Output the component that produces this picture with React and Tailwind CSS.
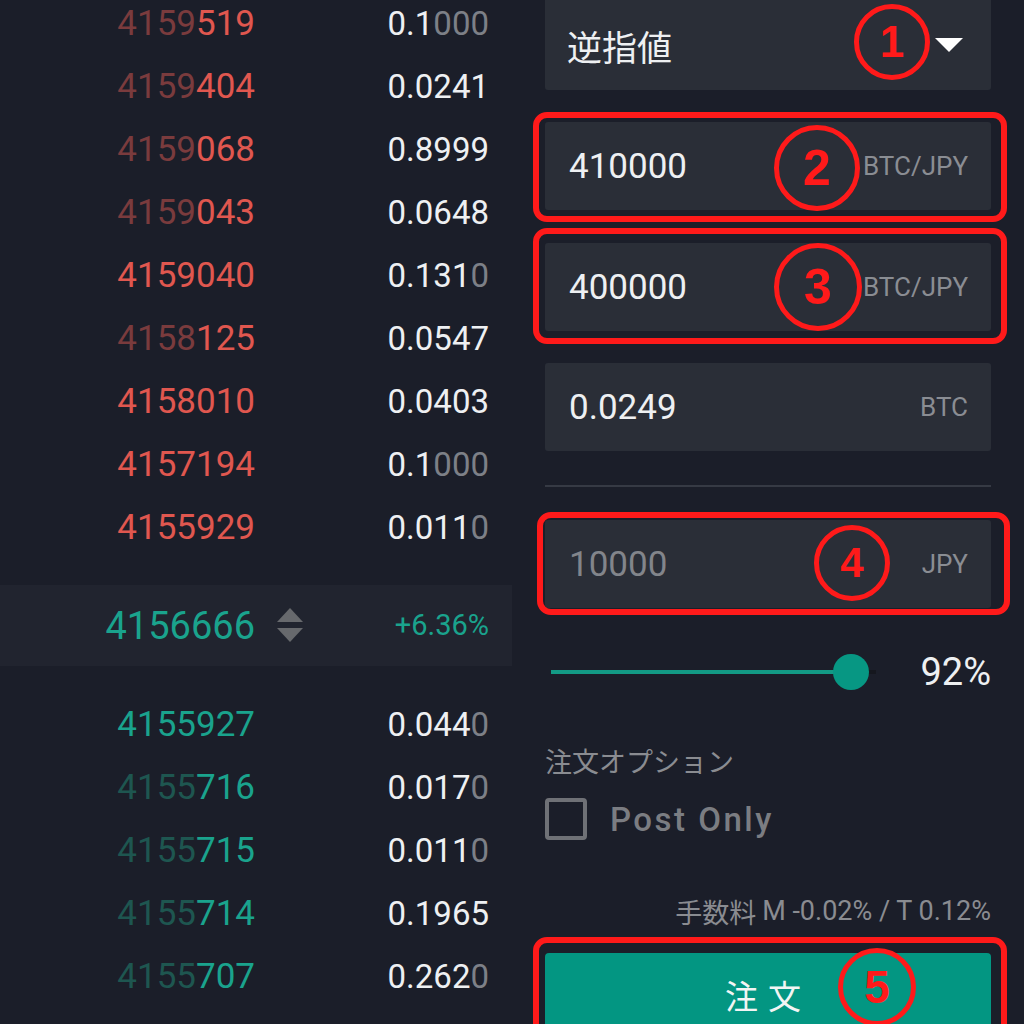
import React from "react";

const asks = [
  [["4159", "519"], ["0.1", "000"]],
  [["4159", "404"], ["0.0241", ""]],
  [["4159", "068"], ["0.8999", ""]],
  [["4159", "043"], ["0.0648", ""]],
  [["", "4159040"], ["0.131", "0"]],
  [["4158", "125"], ["0.0547", ""]],
  [["", "4158010"], ["0.0403", ""]],
  [["", "4157194"], ["0.1", "000"]],
  [["", "4155929"], ["0.011", "0"]],
];

const bids = [
  [["", "4155927"], ["0.044", "0"]],
  [["4155", "716"], ["0.017", "0"]],
  [["4155", "715"], ["0.011", "0"]],
  [["4155", "714"], ["0.1965", ""]],
  [["4155", "707"], ["0.262", "0"]],
];

function Row({ price, size, side }) {
  const dim = side === "ask" ? "text-[#7a3b3d]" : "text-[#1e5650]";
  const bright = side === "ask" ? "text-[#e0574f]" : "text-[#1aa38d]";
  return (
    <div className="h-[63px] shrink-0 flex items-center text-[35px] leading-none">
      <div className="w-[255px] text-right">
        <span className={dim}>{price[0]}</span>
        <span className={bright}>{price[1]}</span>
      </div>
      <div className="flex-1 text-right pr-[23px] text-[33px]">
        <span className="text-[#eef0f2]">{size[0]}</span>
        <span className="text-[#7d8087]">{size[1]}</span>
      </div>
    </div>
  );
}

function Circle({ n, className }) {
  return (
    <div
      className={
        "absolute rounded-full border-[5px] border-[#ff1a1a] flex items-center justify-center text-[#ff1a1a] font-bold leading-none " +
        className
      }
      style={{ fontFamily: '"Liberation Sans", Arial, sans-serif' }}
    >
      {n}
    </div>
  );
}

function Input({ value, unit, placeholder }) {
  return (
    <div className="relative h-[88px] bg-[#2a2e37] rounded-[3px] flex items-center pl-[24px] pr-[23px]">
      <span className={"text-[35px] leading-none " + (placeholder ? "text-[#82858b]" : "text-[#eef0f2]")}>
        {value}
      </span>
      <span className="ml-auto text-[26px] text-[#8a8d93] leading-none">{unit}</span>
    </div>
  );
}

export default function App() {
  return (
    <div
      className="w-[1024px] h-[1024px] overflow-hidden bg-[#1b1e29] flex items-start"
      style={{ fontFamily: 'Roboto, "Noto Sans CJK JP", sans-serif' }}
    >
      {/* Order book */}
      <div className="w-[512px] shrink-0 flex flex-col">
        <div className="-mt-[8px] shrink-0">
          {asks.map((r, i) => (
            <Row key={i} price={r[0]} size={r[1]} side="ask" />
          ))}
        </div>
        <div className="mt-[26px] h-[81px] shrink-0 bg-[#21242f] flex items-center">
          <div className="w-[255px] text-right text-[38px] leading-none text-[#1aa38d]">4156666</div>
          <svg className="ml-[22px]" width="26" height="35" viewBox="0 0 26 35">
            <polygon points="13,0 26,14 0,14" fill="#67696d" />
            <polygon points="0,20 26,20 13,34" fill="#67696d" />
          </svg>
          <div className="flex-1 text-right pr-[23px] text-[29px] leading-none text-[#1aa38d]">+6.36%</div>
        </div>
        <div className="mt-[27px] shrink-0">
          {bids.map((r, i) => (
            <Row key={i} price={r[0]} size={r[1]} side="bid" />
          ))}
        </div>
      </div>

      {/* Order form */}
      <div className="w-[446px] shrink-0 ml-[33px] flex flex-col [&>*]:shrink-0">
        <div className="relative h-[90px] bg-[#2a2e37] rounded-b-[3px] flex items-center pl-[22px] pr-[28px]">
          <span
            className="text-[35px] text-[#eef0f2] leading-none"
            style={{ fontFamily: '"Noto Sans CJK JP", sans-serif' }}
          >
            逆指値
          </span>
          <svg className="ml-auto" width="28" height="14" viewBox="0 0 28 14">
            <polygon points="0,0 28,0 14,14" fill="#ffffff" />
          </svg>
          <Circle n="1" className="w-[76px] h-[76px] left-[309px] top-[4px] text-[44px]" />
        </div>

        <div className="relative mt-[32px]">
          <Input value="410000" unit="BTC/JPY" />
          <div className="absolute -left-[12px] -right-[16px] -top-[10px] -bottom-[12px] border-[6px] border-[#ff1a1a] rounded-[14px]" />
          <Circle n="2" className="w-[86px] h-[86px] left-[229px] top-[3px] text-[50px]" />
        </div>

        <div className="relative mt-[33px]">
          <Input value="400000" unit="BTC/JPY" />
          <div className="absolute -left-[12px] -right-[16px] -top-[15px] -bottom-[13px] border-[6px] border-[#ff1a1a] rounded-[14px]" />
          <Circle n="3" className="w-[88px] h-[88px] left-[229px] top-[0px] text-[50px]" />
        </div>

        <div className="mt-[32px]">
          <Input value="0.0249" unit="BTC" />
        </div>

        <div className="mt-[34px] h-[2px] bg-[#363a44]" />

        <div className="relative mt-[33px]">
          <Input value="10000" unit="JPY" placeholder />
          <div className="absolute -left-[8px] -right-[19px] -top-[8px] -bottom-[7px] border-[6px] border-[#ff1a1a] rounded-[14px]" />
          <Circle n="4" className="w-[76px] h-[76px] left-[269px] top-[5px] text-[42px]" />
        </div>

        <div className="mt-[44px] h-[40px] flex items-center">
          <div className="relative ml-[6px] w-[325px] h-[4px] bg-[#15171e]">
            <div className="h-[4px] w-[300px] bg-[#139a85]" />
            <div className="absolute left-[282px] -top-[16px] w-[36px] h-[36px] rounded-full bg-[#079783]" />
          </div>
          <span className="ml-auto text-[38px] leading-none text-[#eef0f2]">92%</span>
        </div>

        <div
          className="mt-[50px] h-[36px] flex items-center text-[27px] text-[#8a8c91] leading-none"
          style={{ fontFamily: '"Noto Sans CJK JP", sans-serif' }}
        >
          注文オプション
        </div>

        <div className="mt-[20px] h-[42px] flex items-center">
          <div className="w-[42px] h-[42px] border-[4px] border-[#6f7176] rounded-[4px]" />
          <span className="ml-[23px] text-[33px] font-medium tracking-[2.5px] text-[#7b7d82] leading-none">
            Post Only
          </span>
        </div>

        <div className="mt-[56px] h-[30px] flex items-center justify-end text-[27px] text-[#8a8c91] leading-none">
          <span style={{ fontFamily: '"Noto Sans CJK JP", sans-serif' }}>手数料</span>
          <span className="ml-[6px]">M -0.02% / T 0.12%</span>
        </div>

        <div className="relative mt-[27px]">
          <div className="h-[80px] bg-[#039682] rounded-[4px] flex items-center justify-center">
            <span
              className="text-[33px] text-[#f2f5f4] tracking-[10px] leading-none pt-[4px]"
              style={{ fontFamily: '"Noto Sans CJK JP", sans-serif' }}
            >
              注文
            </span>
          </div>
          <div className="absolute -left-[12px] -right-[16px] -top-[16px] -bottom-[20px] border-[6px] border-[#ff1a1a] rounded-[14px]" />
          <Circle n="5" className="w-[78px] h-[78px] left-[293px] -top-[5px] text-[46px]" />
        </div>
      </div>
    </div>
  );
}
